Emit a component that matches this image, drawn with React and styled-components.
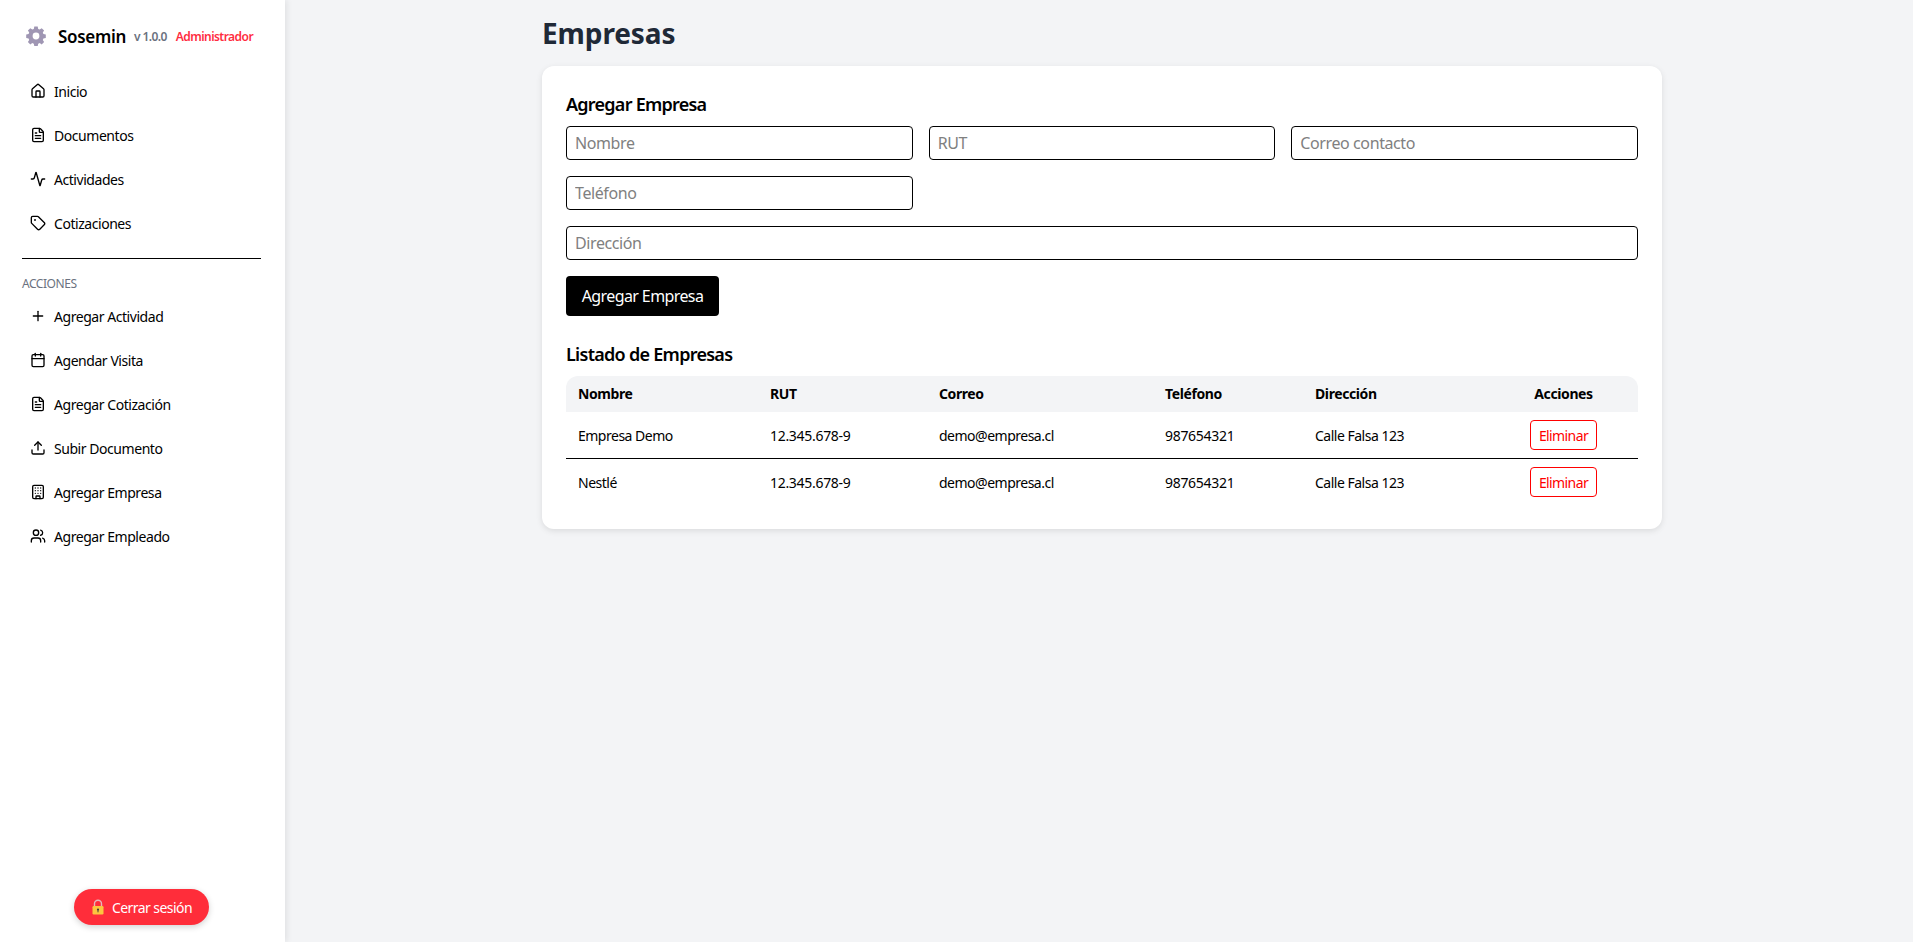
import React from "react";
import styled, { createGlobalStyle } from "styled-components";
import {
    House,
    FileText,
    Activity,
    Tag,
    Plus,
    Calendar,
    Upload,
    Building,
    Users,
} from "lucide-react";

const mainLinks = [
    { label: "Inicio", Icon: House },
    { label: "Documentos", Icon: FileText },
    { label: "Actividades", Icon: Activity },
    { label: "Cotizaciones", Icon: Tag },
];

const actionLinks = [
    { label: "Agregar Actividad", Icon: Plus },
    { label: "Agendar Visita", Icon: Calendar },
    { label: "Agregar Cotización", Icon: FileText },
    { label: "Subir Documento", Icon: Upload },
    { label: "Agregar Empresa", Icon: Building },
    { label: "Agregar Empleado", Icon: Users },
];

const companies = [
    { name: "Empresa Demo", rut: "12.345.678-9", mail: "demo@empresa.cl", phone: "987654321", address: "Calle Falsa 123" },
    { name: "Nestlé", rut: "12.345.678-9", mail: "demo@empresa.cl", phone: "987654321", address: "Calle Falsa 123" },
];

function GearIcon() {
    return (
        <svg width="20" height="20" viewBox="0 0 20 20">
            <path
                fill="#9f96b3"
                fillRule="evenodd"
                d="M8.3 0.5h3.4l0.5 2.4 1.5 0.6 2-1.3 2.4 2.4-1.3 2 0.6 1.5 2.4 0.5v3.4l-2.4 0.5-0.6 1.5 1.3 2-2.4 2.4-2-1.3-1.5 0.6-0.5 2.4h-3.4l-0.5-2.4-1.5-0.6-2 1.3-2.4-2.4 1.3-2-0.6-1.5-2.4-0.5v-3.4l2.4-0.5 0.6-1.5-1.3-2 2.4-2.4 2 1.3 1.5-0.6z M10 6.6a3.4 3.4 0 1 0 0 6.8a3.4 3.4 0 1 0 0-6.8z"
            />
        </svg>
    );
}

function LockIcon() {
    return (
        <svg width="14" height="16" viewBox="0 0 14 16">
            <path d="M3.5 8V4.8a3.5 3.5 0 0 1 7 0V8" fill="none" stroke="#e3b8bc" strokeWidth="1.4" />
            <rect x="1.5" y="7" width="11" height="8.5" rx="1.2" fill="#fcc63f" />
            <circle cx="7" cy="10.5" r="1.1" fill="#4a4038" />
            <rect x="6.5" y="10.5" width="1" height="2.8" fill="#4a4038" />
        </svg>
    );
}

function App() {
    return (
        <Layout>
            <GlobalStyle />
            <Sidebar>
                <Brand>
                    <GearIcon />
                    <BrandName>Sosemin</BrandName>
                    <Version>v 1.0.0</Version>
                    <Role>Administrador</Role>
                </Brand>
                <NavList>
                    {mainLinks.map(({ label, Icon }) => (
                        <NavItem key={label}>
                            <Icon size={16} strokeWidth={2} />
                            {label}
                        </NavItem>
                    ))}
                </NavList>
                <Divider />
                <SectionLabel>ACCIONES</SectionLabel>
                <ActionList>
                    {actionLinks.map(({ label, Icon }) => (
                        <NavItem key={label}>
                            <Icon size={16} strokeWidth={2} />
                            {label}
                        </NavItem>
                    ))}
                </ActionList>
                <LogoutButton>
                    <LockIcon />
                    Cerrar sesión
                </LogoutButton>
            </Sidebar>
            <Main>
                <Content>
                    <PageTitle>Empresas</PageTitle>
                    <Card>
                        <CardTitle>Agregar Empresa</CardTitle>
                        <FormGrid>
                            <Field placeholder="Nombre" />
                            <Field placeholder="RUT" />
                            <Field placeholder="Correo contacto" />
                            <Field placeholder="Teléfono" />
                            <Field placeholder="Dirección" $wide />
                        </FormGrid>
                        <SubmitButton>Agregar Empresa</SubmitButton>
                        <ListTitle>Listado de Empresas</ListTitle>
                        <Table>
                            <thead>
                                <tr>
                                    <HeadCell $w={192}>Nombre</HeadCell>
                                    <HeadCell $w={169}>RUT</HeadCell>
                                    <HeadCell $w={226}>Correo</HeadCell>
                                    <HeadCell $w={150}>Teléfono</HeadCell>
                                    <HeadCell $w={186}>Dirección</HeadCell>
                                    <HeadCell $center>Acciones</HeadCell>
                                </tr>
                            </thead>
                            <tbody>
                                {companies.map((c) => (
                                    <Row key={c.name}>
                                        <Cell>{c.name}</Cell>
                                        <Cell $digits>{c.rut}</Cell>
                                        <Cell>{c.mail}</Cell>
                                        <Cell $digits>{c.phone}</Cell>
                                        <Cell>{c.address}</Cell>
                                        <Cell $center>
                                            <DeleteButton>Eliminar</DeleteButton>
                                        </Cell>
                                    </Row>
                                ))}
                            </tbody>
                        </Table>
                    </Card>
                </Content>
            </Main>
        </Layout>
    );
}

const GlobalStyle = createGlobalStyle`
    * {
        box-sizing: border-box;
    }
    body {
        margin: 0;
        font-family: "Noto Sans", "Open Sans", sans-serif;
        background: #f3f4f6;
        color: #000;
    }
`;

const Layout = styled.div`
    display: flex;
    height: 942px;
    overflow: hidden;
`;

const Sidebar = styled.aside`
    width: 285px;
    flex-shrink: 0;
    display: flex;
    flex-direction: column;
    background: #fff;
    padding: 26px 22px 17px;
    box-shadow: 2px 0 6px rgba(0, 0, 0, 0.08);
`;

const Brand = styled.div`
    display: flex;
    align-items: center;
    height: 20px;
    padding-left: 4px;
    margin-bottom: 23px;
`;

const BrandName = styled.span`
    margin-left: 12px;
    font-size: 17px;
    font-weight: 600;
    letter-spacing: -0.3px;
`;

const Version = styled.span`
    margin-left: 8px;
    font-size: 12px;
    font-weight: 600;
    color: #6b7280;
    letter-spacing: -0.6px;
`;

const Role = styled.span`
    margin-left: 9px;
    font-size: 12px;
    font-weight: 600;
    color: #ff2d3f;
    letter-spacing: -0.55px;
`;

const NavList = styled.nav`
    display: flex;
    flex-direction: column;
`;

const ActionList = styled(NavList)`
    flex: 1;
    margin-top: 2px;
`;

const NavItem = styled.a`
    display: flex;
    align-items: center;
    gap: 8px;
    height: 44px;
    padding-left: 8px;
    font-size: 14px;
    letter-spacing: -0.45px;
    color: #000;

    svg {
        flex-shrink: 0;
        color: #000;
    }
`;

const Divider = styled.hr`
    width: 239px;
    height: 1px;
    margin: 13px 0 17px;
    border: 0;
    background: #000;
`;

const SectionLabel = styled.div`
    font-size: 12px;
    line-height: 16px;
    letter-spacing: -0.45px;
    color: #6b7280;
`;

const LogoutButton = styled.button`
    align-self: center;
    display: flex;
    align-items: center;
    justify-content: center;
    gap: 7px;
    width: 135px;
    height: 36px;
    margin-right: 2px;
    border: 0;
    border-radius: 18px;
    background: #ff2d3a;
    color: #fff;
    font-family: inherit;
    font-size: 14px;
    letter-spacing: -0.55px;
    box-shadow: 0 2px 6px rgba(0, 0, 0, 0.18);
`;

const Main = styled.main`
    flex: 1;
    min-width: 0;
`;

const Content = styled.div`
    width: 1120px;
    margin-left: 257px;
    padding-top: 16px;
`;

const PageTitle = styled.h1`
    margin: 0 0 16px;
    font-size: 28px;
    line-height: 34px;
    font-weight: 700;
    letter-spacing: -0.1px;
    color: #1f2937;
`;

const Card = styled.section`
    background: #fff;
    border-radius: 12px;
    padding: 24px 24px 24px;
    box-shadow: 0 2px 6px rgba(0, 0, 0, 0.1);
`;

const CardTitle = styled.h2`
    margin: 0 0 8px;
    font-size: 18px;
    line-height: 28px;
    font-weight: 600;
    letter-spacing: -0.75px;
`;

const FormGrid = styled.div`
    display: grid;
    grid-template-columns: repeat(3, 1fr);
    gap: 16px;
`;

const Field = styled.input`
    grid-column: ${(props) => (props.$wide ? "1 / -1" : "auto")};
    height: 34px;
    padding: 0 8px;
    border: 1px solid #000;
    border-radius: 4px;
    background: #fff;
    font-family: inherit;
    font-size: 16px;
    letter-spacing: -0.4px;

    &::placeholder {
        color: #808080;
    }
`;

const SubmitButton = styled.button`
    display: block;
    width: 153px;
    height: 40px;
    margin-top: 16px;
    border: 0;
    border-radius: 4px;
    background: #000;
    color: #fff;
    font-family: inherit;
    font-size: 16px;
    letter-spacing: -0.6px;
`;

const ListTitle = styled(CardTitle)`
    margin: 24px 0 8px;
    letter-spacing: -0.72px;
`;

const Table = styled.table`
    width: 100%;
    border-collapse: separate;
    border-spacing: 0;
    table-layout: fixed;
    font-size: 14px;
`;

const HeadCell = styled.th`
    width: ${(props) => (props.$w ? `${props.$w}px` : "auto")};
    height: 36px;
    padding: 0 12px 1px;
    background: #f3f4f6;
    font-weight: 700;
    letter-spacing: -0.4px;
    text-align: ${(props) => (props.$center ? "center" : "left")};

    &:first-child {
        border-top-left-radius: 12px;
    }
    &:last-child {
        border-top-right-radius: 12px;
    }
`;

const Cell = styled.td`
    height: 46px;
    padding: 0 12px;
    letter-spacing: ${(props) => (props.$digits ? "-0.3px" : "-0.5px")};
    text-align: ${(props) => (props.$center ? "center" : "left")};
`;

const Row = styled.tr`
    &:not(:last-child) ${Cell} {
        height: 47px;
        border-bottom: 1px solid #000;
    }
`;

const DeleteButton = styled.button`
    width: 67px;
    height: 30px;
    padding: 0;
    border: 1px solid #f00;
    border-radius: 4px;
    background: #fff;
    color: #f00;
    font-family: inherit;
    font-size: 14px;
    letter-spacing: -0.6px;
    vertical-align: middle;
`;

export default App;
